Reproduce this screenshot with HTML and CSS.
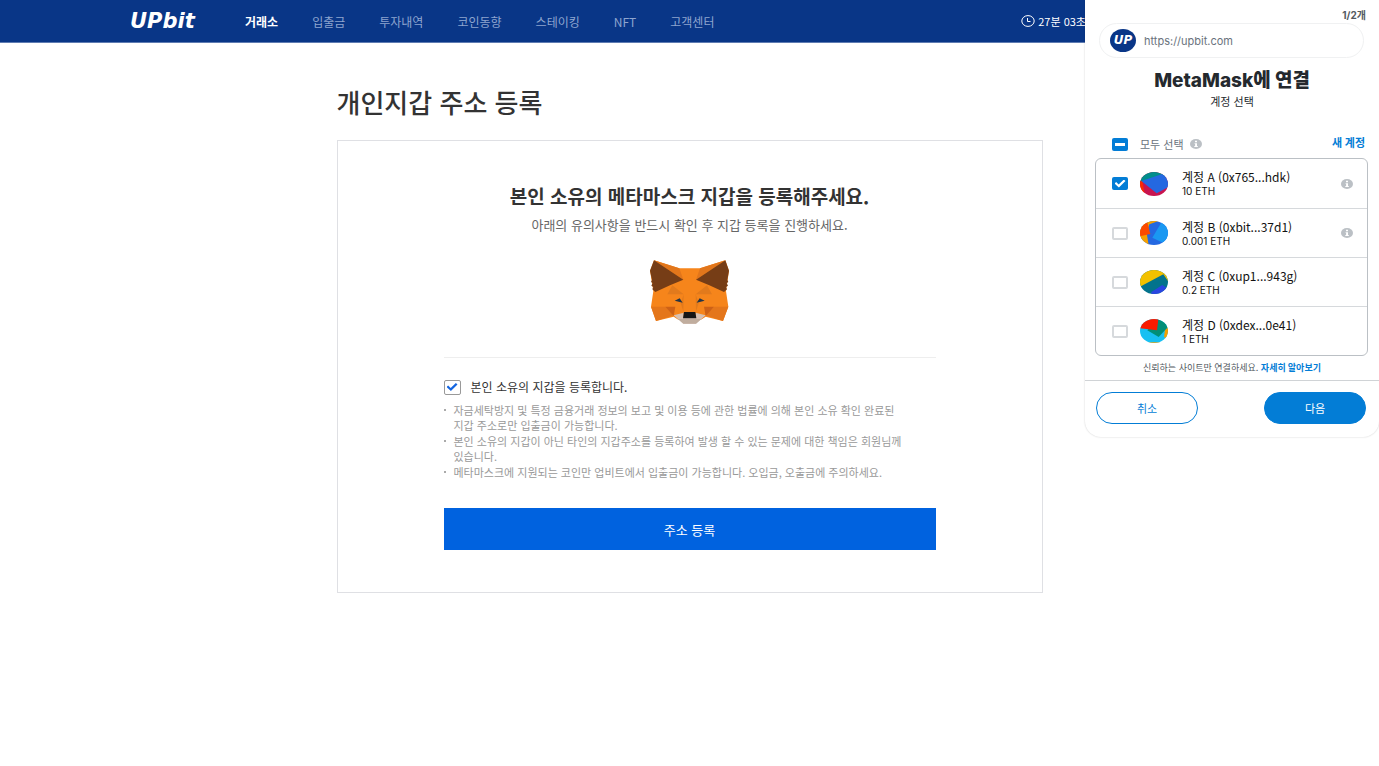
FILE: index.html
```html
<!DOCTYPE html>
<html lang="ko">
<head>
    <meta charset="UTF-8">
    <meta name="viewport" content="width=device-width, initial-scale=1.0">
    <title>개인지갑 주소 등록</title>
    <link rel="stylesheet" href="styles.css">
</head>
<body>

    <!-- Top bar -->
    <header class="header">
        <a class="logo" href="#">UPbit</a>
        <nav class="nav">
            <a class="active" href="#">거래소</a>
            <a href="#">입출금</a>
            <a href="#">투자내역</a>
            <a href="#">코인동향</a>
            <a href="#">스테이킹</a>
            <a href="#">NFT</a>
            <a href="#">고객센터</a>
        </nav>
        <div class="session">
            <svg width="14" height="12" viewBox="0 0 14 12" fill="none" stroke="currentColor">
                <ellipse cx="7" cy="6" rx="6.2" ry="5.4"/>
                <path d="M6.5 3v3.5h3"/>
            </svg>
            <span>27분 03초</span>
        </div>
    </header>

    <main class="page">
        <h1>개인지갑 주소 등록</h1>
        <section class="card">
            <h2>본인 소유의 메타마스크 지갑을 등록해주세요.</h2>
            <p class="lead">아래의 유의사항을 반드시 확인 후 지갑 등록을 진행하세요.</p>

            <!-- Fox -->
            <svg class="fox" width="79" height="64" viewBox="30 30 237 192" preserveAspectRatio="none">
                <path fill="#F6851B" d="M42 31L118 55H180L256 31L267 62L258 124L265 170L249 213L197 200L183 209H115L101 200L48 213L33 170L40 124L30 62Z"/>
                <path fill="#E2761B" d="M42 31L118 55L130 89ZM256 31L180 55L168 89Z"/>
                <path fill="#763D16" d="M42 31L130 89L90 106L46 126L37 118L40 111L34 107L38 99L33 96L36 90L30 62Z"/>
                <path fill="#763D16" d="M256 31L168 89L208 106L252 126L261 118L258 111L264 107L260 99L265 96L262 90L267 62Z"/>
                <path fill="#E4761B" d="M33 170H76L104 195L48 213ZM265 170H222L194 195L249 213Z"/>
                <path fill="#CD6116" d="M76 170H106L101 198ZM222 170H192L197 198Z"/>
                <path fill="#E27A1C" d="M97 106L131 133L82 133ZM201 106L167 133L216 133Z"/>
                <path fill="#E27A1C" d="M131 133L130 184L122 160ZM167 133L168 184L176 160Z"/>
                <path fill="#233447" d="M104 152L119 145L128 158ZM194 152L179 145L170 158Z"/>
                <path fill="#D7C1B3" d="M101 196L131 188V204H167V188L197 196L168 221H130Z"/>
                <path fill="#C0AD9E" d="M114 207H184L168 221H130Z"/>
                <path fill="#161616" d="M132 186H166L169 205H129Z"/>
            </svg>

            <hr>

            <label class="agree">
                <input type="checkbox" class="box" checked>
                본인 소유의 지갑을 등록합니다.
            </label>
            <ul class="notes">
                <li>자금세탁방지 및 특정 금융거래 정보의 보고 및 이용 등에 관한 법률에 의해 본인 소유 확인 완료된 지갑 주소로만 입출금이 가능합니다.</li>
                <li>본인 소유의 지갑이 아닌 타인의 지갑주소를 등록하여 발생 할 수 있는 문제에 대한 책임은 회원님께 있습니다.</li>
                <li>메타마스크에 지원되는 코인만 업비트에서 입출금이 가능합니다. 오입금, 오출금에 주의하세요.</li>
            </ul>
            <button type="button" class="submit">주소 등록</button>
        </section>
    </main>

    <!-- Wallet extension popup -->
    <aside class="popup">
        <div class="step">1/2개</div>
        <div class="site">
            <span class="site-logo">UP</span>
            <span>https://upbit.com</span>
        </div>
        <h3>MetaMask에 연결</h3>
        <p class="popup-sub">계정 선택</p>

        <div class="select-all">
            <label>
                <input type="checkbox" class="tick" id="select-all">
                모두 선택
            </label>
            <svg class="info" viewBox="0 0 12 10"><ellipse cx="6" cy="5" rx="6" ry="5"/><path d="M5 1.8h2v1.4H5zM4.6 4.2H7v2.9h.8v1H4.3v-1h.8V5.1h-.5z"/></svg>
            <a href="#">새 계정</a>
        </div>

        <ul class="accounts">
            <li>
                <label>
                    <input type="checkbox" class="tick" checked>
                    <svg class="avatar" viewBox="0 0 84 72">
                        <rect width="84" height="72" fill="#C8144F"/>
                        <path fill="#018E8C" d="M0 0H84V12L7 28L0 32Z"/>
                        <path fill="#FA2B00" d="M0 26L7 27L14 66L0 60Z"/>
                        <path fill="#2468E1" d="M4 27L74 4L84 20V46L50 64Z"/>
                    </svg>
                    <span class="account"><b>계정 A (0x765...hdk)</b><small>10 ETH</small></span>
                </label>
                <svg class="info" viewBox="0 0 12 10"><ellipse cx="6" cy="5" rx="6" ry="5"/><path d="M5 1.8h2v1.4H5zM4.6 4.2H7v2.9h.8v1H4.3v-1h.8V5.1h-.5z"/></svg>
            </li>
            <li>
                <label>
                    <input type="checkbox" class="tick">
                    <svg class="avatar" viewBox="0 0 84 72">
                        <rect width="84" height="72" fill="#2468E1"/>
                        <path fill="#F5A000" d="M0 0H56L28 10L20 36L26 72H0Z"/>
                        <path fill="#FB4900" d="M0 14L22 4L31 39L0 46Z"/>
                        <path fill="#1A98F2" d="M65 3L84 16V58L70 66L37 50Z"/>
                    </svg>
                    <span class="account"><b>계정 B (0xbit...37d1)</b><small>0.001 ETH</small></span>
                </label>
                <svg class="info" viewBox="0 0 12 10"><ellipse cx="6" cy="5" rx="6" ry="5"/><path d="M5 1.8h2v1.4H5zM4.6 4.2H7v2.9h.8v1H4.3v-1h.8V5.1h-.5z"/></svg>
            </li>
            <li>
                <label>
                    <input type="checkbox" class="tick">
                    <svg class="avatar" viewBox="0 0 84 72">
                        <rect width="84" height="72" fill="#03738C"/>
                        <path fill="#F3C100" d="M0 0H84V33L70 13L0 50Z"/>
                        <path fill="#2A45E0" d="M34 66L67 45L84 56V72H34Z"/>
                    </svg>
                    <span class="account"><b>계정 C (0xup1...943g)</b><small>0.2 ETH</small></span>
                </label>
            </li>
            <li>
                <label>
                    <input type="checkbox" class="tick">
                    <svg class="avatar" viewBox="0 0 84 72">
                        <rect width="84" height="72" fill="#18C0F2"/>
                        <path fill="#F5A000" d="M75 32L84 24V60L72 54ZM28 70H60V72H28Z"/>
                        <path fill="#018E77" d="M54 0L84 10V24L56 54L22 34Z"/>
                        <path fill="#FA1B00" d="M0 0H55L51 34L0 28Z"/>
                    </svg>
                    <span class="account"><b>계정 D (0xdex...0e41)</b><small>1 ETH</small></span>
                </label>
            </li>
        </ul>

        <p class="trust">신뢰하는 사이트만 연결하세요. <a href="#">자세히 알아보기</a></p>
        <div class="actions">
            <button type="button" class="cancel">취소</button>
            <button type="button" class="next">다음</button>
        </div>
    </aside>

    <script>
        // only some of the accounts are picked
        document.getElementById('select-all').indeterminate = true;
    </script>

</body>
</html>
```

FILE: styles.css
```css
* {
    box-sizing: border-box;
}

body {
    margin: 0;
    font-family: "Noto Sans CJK KR", "Noto Sans", sans-serif;
    color: #333;
    background-color: #fff;
}

h1, h2, h3, p, ul {
    margin: 0;
    padding: 0;
}

a {
    text-decoration: none;
}

button {
    font-family: inherit;
    cursor: pointer;
}

/* Top bar */
.header {
    display: flex;
    align-items: center;
    height: 43px;
    padding: 0 293px 0 130px;
    background-color: #093687;
    border-bottom: 1px solid #5f7cb2;
    color: #fff;
}

.logo {
    width: 115px;
    font: italic bold 21px "DejaVu Sans", sans-serif;
    color: #fff;
}

.nav {
    display: flex;
    gap: 34px;
    font-size: 12px;
}

.nav a {
    color: #8ea5cf;
}

.nav .active {
    color: #fff;
    font-weight: bold;
}

.session {
    display: flex;
    align-items: center;
    gap: 3px;
    margin-left: auto;
    font-size: 11px;
    white-space: nowrap;
}

/* Registration page */
.page {
    max-width: 706px;
    margin: 0 auto;
    padding: 39px 0;
}

h1 {
    margin-bottom: 18px;
    font-size: 26px;
    font-weight: 500;
    line-height: 40px;
}

.card {
    padding: 40px 106px 42px;
    border: 1px solid #dfe0e4;
}

h2 {
    font-size: 19px;
    line-height: 30px;
    text-align: center;
}

.lead {
    margin-top: 4px;
    font-size: 13px;
    line-height: 20px;
    color: #666;
    text-align: center;
}

.fox {
    display: block;
    margin: 25px auto 33px;
}

hr {
    margin: 0 0 19px;
    border: 0;
    border-top: 1px solid #eee;
}

.agree {
    display: flex;
    align-items: center;
    gap: 10px;
    font-size: 12px;
    line-height: 20px;
}

.box, .tick {
    flex: none;
    display: grid;
    place-items: center;
    margin: 0;
    appearance: none;
    border-radius: 2px;
}

.box {
    width: 17px;
    height: 15px;
    border: 1px solid #999;
}

.box:checked::before, .tick:checked::before {
    content: "";
    width: 11px;
    height: 8px;
    background-color: #1465e0;
    clip-path: polygon(0 50%, 15% 32%, 38% 62%, 85% 0, 100% 18%, 40% 100%);
}

.notes {
    margin-top: 6px;
    padding: 0 34px 0 10px;
    list-style: none;
    font-size: 11px;
    line-height: 15px;
    color: #999;
}

.notes li {
    position: relative;
    margin-bottom: 1px;
}

.notes li::before {
    content: "";
    position: absolute;
    top: 6px;
    left: -10px;
    width: 2px;
    height: 2px;
    background-color: #aaa;
}

.submit {
    width: 100%;
    height: 42px;
    margin-top: 27px;
    border: 0;
    background-color: #0062df;
    color: #fff;
    font-size: 13px;
}

/* Wallet extension popup, lies over the page */
.popup {
    position: absolute;
    top: 0;
    right: 0;
    width: 294px;
    padding-top: 8px;
    background-color: #fff;
    border-radius: 0 0 16px 16px;
    box-shadow: 0 0 2px rgba(0, 0, 0, 0.2);
    font-family: Inter, "Noto Sans CJK KR", sans-serif;
    color: #24292e;
}

.popup a {
    color: #037dd6;
    font-weight: bold;
}

.step {
    padding-right: 13px;
    font-size: 10px;
    font-weight: bold;
    line-height: 15px;
    text-align: right;
    color: #535a61;
}

.site {
    display: flex;
    align-items: center;
    gap: 8px;
    height: 35px;
    margin: 0 15px 0 14px;
    padding-left: 10px;
    border: 1px solid #f0f1f2;
    border-radius: 18px;
    font-size: 11px;
    color: #6a737d;
}

.site-logo {
    width: 26px;
    height: 23px;
    border-radius: 50%;
    background-color: #093687;
    color: #fff;
    font: italic bold 12px/23px "DejaVu Sans", sans-serif;
    text-align: center;
}

h3 {
    margin-top: 10px;
    font-size: 19px;
    font-weight: 800;
    line-height: 26px;
    text-align: center;
}

.popup-sub {
    font-size: 11px;
    line-height: 16px;
    text-align: center;
}

.select-all {
    display: flex;
    align-items: center;
    height: 20px;
    margin: 24px 14px 4px 27px;
    font-size: 11px;
    color: #6a737d;
}

.select-all label {
    display: flex;
    align-items: center;
    gap: 12px;
}

.select-all .info {
    margin-left: 6px;
}

.select-all a {
    margin-left: auto;
    padding-bottom: 4px;
}

.tick {
    width: 16px;
    height: 13px;
    border: 2px solid #d6d9dc;
}

.tick:checked, .tick:indeterminate {
    border: 0;
    background-color: #037dd6;
}

.tick:checked::before {
    background-color: #fff;
}

.tick:indeterminate::before {
    content: "";
    width: 10px;
    height: 3px;
    background-color: #fff;
}

.info {
    flex: none;
    width: 12px;
    height: 10px;
    fill: #bbc0c5;
}

.info path {
    fill: #fff;
}

.accounts {
    margin: 0 11px 0 10px;
    border: 1px solid #bbc0c5;
    border-radius: 6px;
    list-style: none;
}

.accounts li {
    display: flex;
    align-items: center;
    justify-content: space-between;
    height: 49px;
    padding: 0 14px 0 16px;
}

.accounts li + li {
    border-top: 1px solid #d6d9dc;
}

.accounts label {
    display: flex;
    align-items: center;
    gap: 12px;
}

.avatar {
    width: 28px;
    height: 24px;
    border-radius: 50%;
}

.account {
    display: flex;
    flex-direction: column;
    padding: 0 0 2px 2px;
    color: #111;
}

.account b {
    font-family: "Noto Sans CJK KR", sans-serif;
    font-size: 12px;
    font-weight: normal;
    line-height: 17px;
}

.account small {
    font-size: 10px;
    line-height: 12px;
}

.trust {
    padding: 4px 0;
    font-size: 9px;
    line-height: 16px;
    text-align: center;
    color: #535a61;
}

.actions {
    display: flex;
    justify-content: space-between;
    padding: 11px 13px 13px 11px;
    border-top: 1px solid #d0d3d6;
}

.actions button {
    width: 102px;
    height: 32px;
    border: 1px solid #037dd6;
    border-radius: 16px;
    font-size: 11px;
}

.cancel {
    background-color: #fff;
    color: #037dd6;
}

.next {
    background-color: #037dd6;
    color: #fff;
}
```
